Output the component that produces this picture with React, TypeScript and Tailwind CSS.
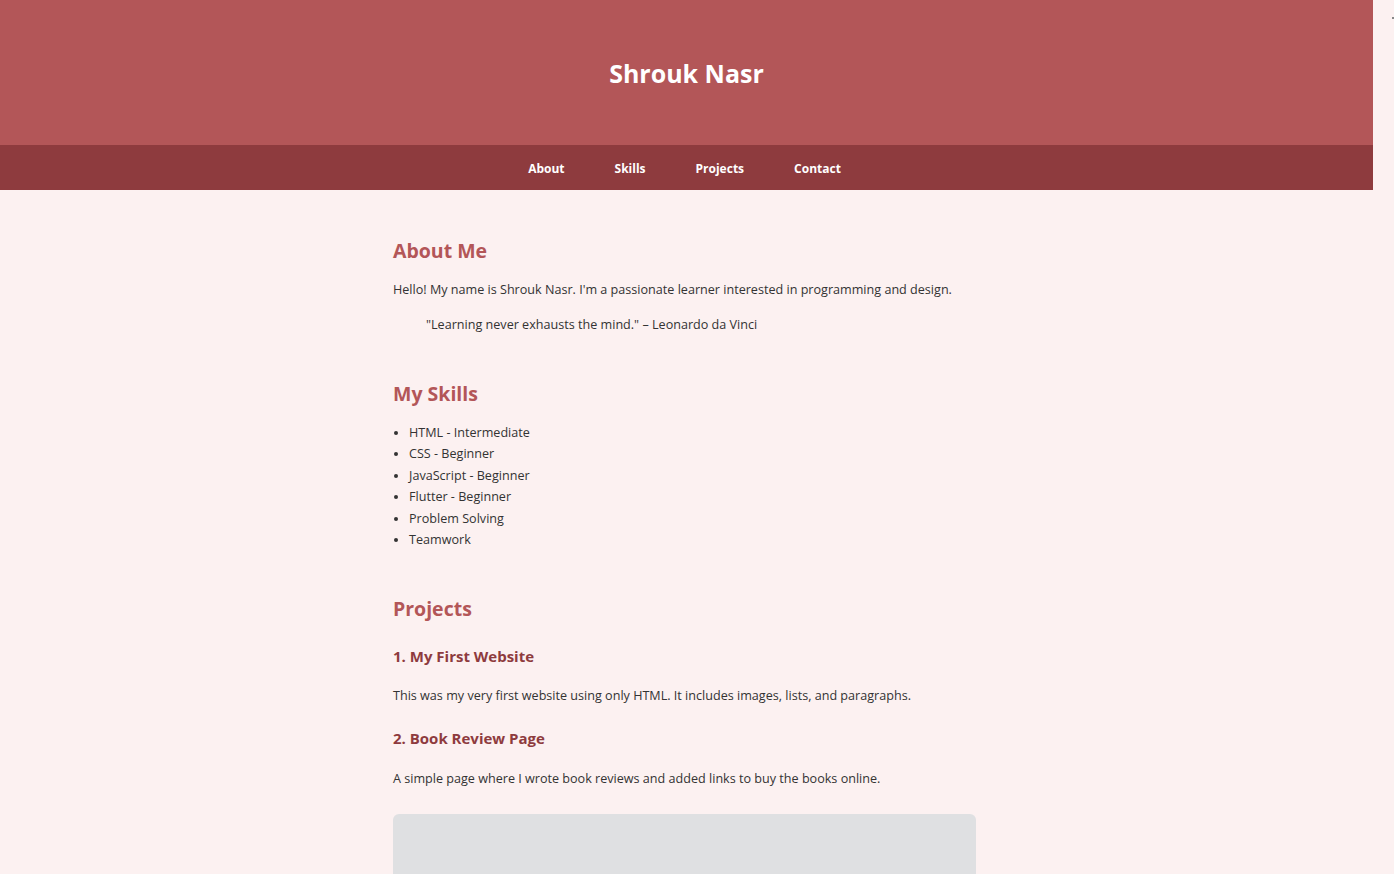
const skills = [
  "HTML - Intermediate",
  "CSS - Beginner",
  "JavaScript - Beginner",
  "Flutter - Beginner",
  "Problem Solving",
  "Teamwork",
];

const App = () => {
  return (
    <div className="flex min-h-[874px] bg-[#fcf1f1] font-['Open_Sans',sans-serif] text-[#333]">
      <div className="w-[1373px] shrink-0">
        <header className="h-[145px] bg-[#b35658] flex items-center justify-center pt-[1px]">
          <h1 className="text-[25px] font-bold text-white leading-none">Shrouk Nasr</h1>
        </header>
        <nav className="h-[45px] bg-[#8e3b3e] flex items-center justify-center gap-[50px] pt-[3px] pr-[4px]">
          {["About", "Skills", "Projects", "Contact"].map((item) => (
            <a key={item} className="text-[12px] font-bold text-white">
              {item}
            </a>
          ))}
        </nav>

        <main className="w-[583px] ml-[393px] pt-[49px] text-[12.6px]">
          <section>
            <h2 className="text-[19.5px] leading-[24px] font-bold text-[#b35658]">About Me</h2>
            <p className="mt-[17px] leading-[20px]">
              Hello! My name is Shrouk Nasr. I'm a passionate learner interested in programming and design.
            </p>
            <blockquote className="mt-[15px] ml-[33px] leading-[20px]">
              "Learning never exhausts the mind." – Leonardo da Vinci
            </blockquote>
          </section>

          <section className="mt-[47px]">
            <h2 className="text-[19.5px] leading-[24px] font-bold text-[#b35658]">My Skills</h2>
            <ul className="mt-[16px] list-disc pl-[16px] marker:text-[#333]">
              {skills.map((s) => (
                <li key={s} className="leading-[21.4px]">
                  {s}
                </li>
              ))}
            </ul>
          </section>

          <section className="mt-[47px]">
            <h2 className="text-[19.5px] leading-[24px] font-bold text-[#b35658]">Projects</h2>
            <h3 className="mt-[25px] text-[15px] leading-[20px] font-bold text-[#8e3b3e]">1. My First Website</h3>
            <p className="mt-[20px] leading-[20px]">
              This was my very first website using only HTML. It includes images, lists, and paragraphs.
            </p>
            <h3 className="mt-[22px] text-[15px] leading-[20px] font-bold text-[#8e3b3e]">2. Book Review Page</h3>
            <p className="mt-[21px] leading-[20px]">
              A simple page where I wrote book reviews and added links to buy the books online.
            </p>
            <div className="mt-[25px] h-[200px] rounded-[6px] bg-[#dfe0e2]" />
          </section>
        </main>
      </div>
      <div className="flex-1 relative">
        <div className="absolute right-0 top-[17px] w-[2px] h-[2px] bg-[#888]" />
      </div>
    </div>
  );
};

export default App;
